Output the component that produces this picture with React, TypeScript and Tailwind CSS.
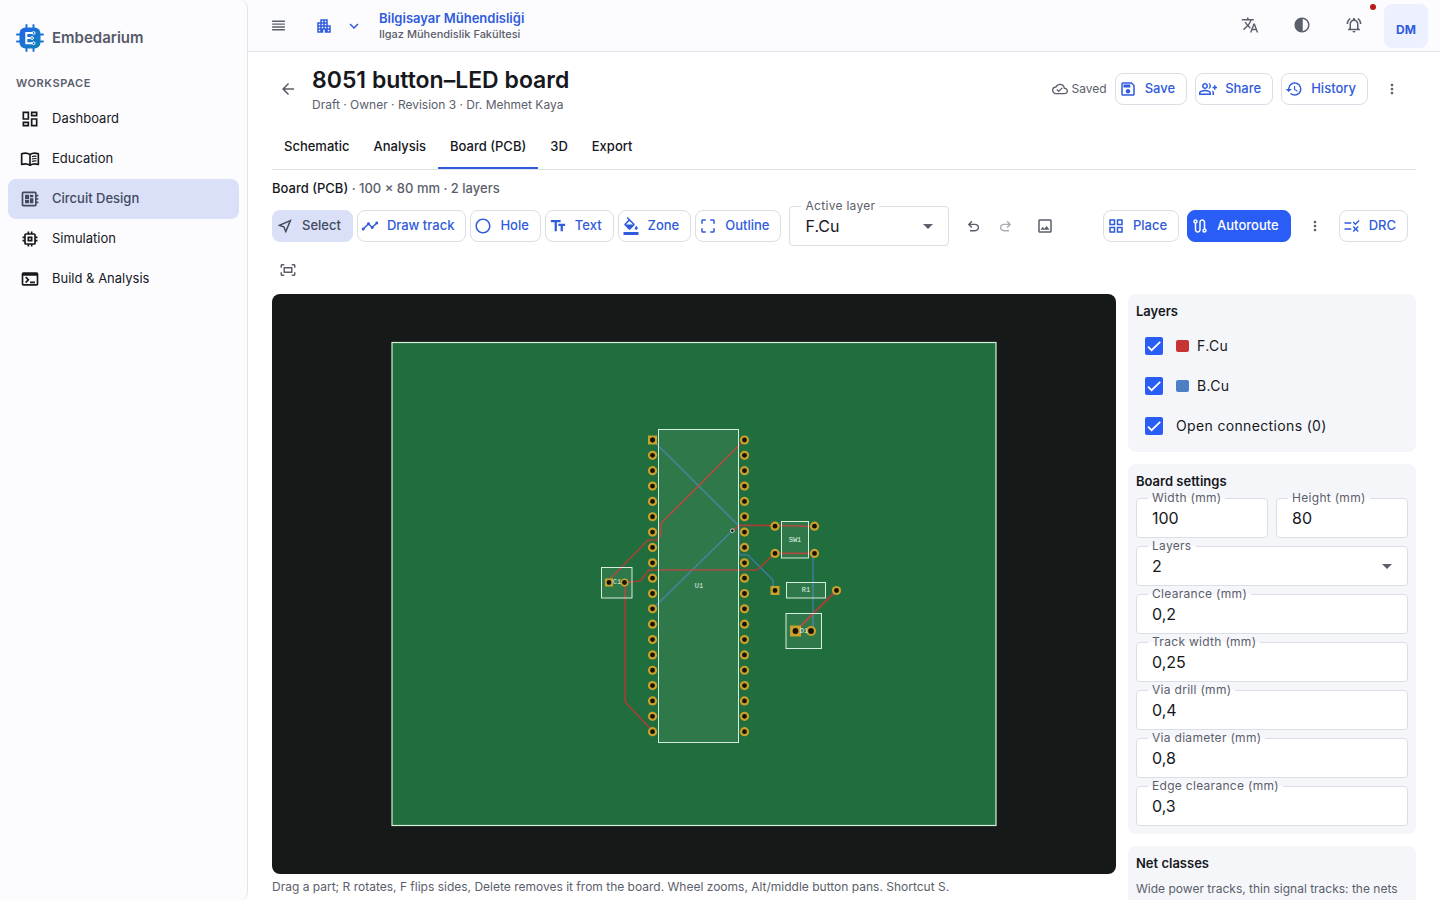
import React, { useState } from 'react';
import type { IconType } from 'react-icons';
import {
  MdApartment,
  MdArrowBack,
  MdArrowDropDown,
  MdContrast,
  MdCropFree,
  MdFormatColorFill,
  MdHistory,
  MdKeyboardArrowDown,
  MdMoreVert,
  MdOutlineCircle,
  MdOutlineCloudDone,
  MdOutlineDashboard,
  MdOutlineDeveloperBoard,
  MdOutlineFitScreen,
  MdOutlineGridView,
  MdOutlineGroupAdd,
  MdOutlineImage,
  MdOutlineMemory,
  MdOutlineNearMe,
  MdOutlineNotificationsActive,
  MdOutlineRoute,
  MdOutlineRule,
  MdOutlineSave,
  MdOutlineTerminal,
  MdReorder,
  MdTextFields,
  MdTimeline,
  MdTranslate,
} from 'react-icons/md';

type IconComponent = IconType | ((props: { className?: string }) => React.ReactNode);

function BookIcon({ className }: { className?: string }) {
  return (
    <svg
      viewBox="0 0 24 24"
      fill="none"
      stroke="currentColor"
      strokeWidth="2"
      strokeLinejoin="round"
      className={className}
      aria-hidden="true"
    >
      <path d="M12 6.6C9.4 4.9 5.2 4.6 2 5.8V18.6C5.2 17.6 9.4 17.8 12 19.5C14.6 17.8 18.8 17.6 22 18.6V5.8C18.8 4.6 14.6 4.9 12 6.6ZM12 6.6V19.5" />
      <path d="M14.3 9.3C16 8.6 18 8.5 19.8 8.8M14.3 12.1C16 11.4 18 11.3 19.8 11.6M14.3 14.9C16 14.2 18 14.1 19.8 14.4" strokeWidth="1.4" />
    </svg>
  );
}

const navItems: { label: string; icon: IconComponent }[] = [
  { label: 'Dashboard', icon: MdOutlineDashboard },
  { label: 'Education', icon: BookIcon },
  { label: 'Circuit Design', icon: MdOutlineDeveloperBoard },
  { label: 'Simulation', icon: MdOutlineMemory },
  { label: 'Build & Analysis', icon: MdOutlineTerminal },
];

const tabs = ['Schematic', 'Analysis', 'Board (PCB)', '3D', 'Export'];

const tools: { label: string; icon: IconType }[] = [
  { label: 'Select', icon: MdOutlineNearMe },
  { label: 'Draw track', icon: MdTimeline },
  { label: 'Hole', icon: MdOutlineCircle },
  { label: 'Text', icon: MdTextFields },
  { label: 'Zone', icon: MdFormatColorFill },
  { label: 'Outline', icon: MdCropFree },
];

function Logo() {
  return (
    <svg viewBox="0 0 28 28" className="size-7" aria-hidden="true">
      <defs>
        <linearGradient id="logo" x1="0" y1="0" x2="1" y2="1">
          <stop offset="0" stopColor="#2563eb" />
          <stop offset="1" stopColor="#0d84b8" />
        </linearGradient>
      </defs>
      <path
        d="M10.5 1v4M17.5 1v4M10.5 23v4M17.5 23v4M1 10.5h4M1 17.5h4M23 10.5h4M23 17.5h4"
        stroke="#1f74cf"
        strokeWidth="2"
        strokeLinecap="round"
      />
      <rect x="3.5" y="3.5" width="21" height="21" rx="6" fill="url(#logo)" />
      <path
        d="M16 9H10.3V19.3H16M10.3 14H14.5"
        fill="none"
        stroke="#fff"
        strokeWidth="2"
      />
      <g fill="#1873cc" stroke="#fff" strokeWidth="1">
        <circle cx="17.6" cy="9" r="1.4" />
        <circle cx="16" cy="14" r="1.4" />
        <circle cx="17.6" cy="19.2" r="1.4" />
      </g>
    </svg>
  );
}

function UndoIcon({ className }: { className?: string }) {
  return (
    <svg viewBox="0 -960 960 960" fill="currentColor" className={className} aria-hidden="true">
      <path d="M280-200v-80h284q63 0 109.5-40T720-420q0-60-46.5-100T564-560H312l104 104-56 56-200-200 200-200 56 56-104 104h252q97 0 166.5 63T800-420q0 94-69.5 157T564-200H280Z" />
    </svg>
  );
}

function IconButton({
  label,
  className = 'size-8',
  children,
}: {
  label: string;
  className?: string;
  children: React.ReactNode;
}) {
  return (
    <button
      type="button"
      aria-label={label}
      className={`flex shrink-0 items-center justify-center rounded-lg text-[#5b5e6b] ${className}`}
    >
      {children}
    </button>
  );
}

type Variant = 'outlined' | 'selected' | 'filled';

const variants: Record<Variant, string> = {
  outlined: 'border-[#dcdee6] bg-white text-[#2f5bdc]',
  selected: 'border-[#d9e0f7] bg-[#d9e0f7] text-[#434a60]',
  filled: 'border-[#2a5cf6] bg-[#2a5cf6] text-white',
};

function ToolButton({
  label,
  icon: Icon,
  variant = 'outlined',
  onClick,
}: {
  label: string;
  icon: IconType;
  variant?: Variant;
  onClick?: () => void;
}) {
  return (
    <button
      type="button"
      onClick={onClick}
      className={`flex h-8 shrink-0 items-center gap-2 rounded-lg border pr-[11px] pl-[3px] text-[13px] font-medium ${variants[variant]}`}
    >
      <Icon className="size-[18px]" />
      {label}
    </button>
  );
}

function Sidebar() {
  return (
    <aside className="flex w-[248px] shrink-0 flex-col rounded-r-lg border-r border-[#e3e4ea] bg-[#fcfcff] px-2">
      <div className="flex items-center gap-2 px-2 pt-6">
        <Logo />
        <span className="text-[15px] leading-7 font-semibold text-[#565a68]">Embedarium</span>
      </div>
      <h2 className="mt-[23px] px-2 text-[11px] leading-4 font-semibold tracking-wider text-[#5b5e6b]">
        WORKSPACE
      </h2>
      <nav className="mt-2 flex flex-col">
        {navItems.map(({ label, icon: Icon }) => (
          <a
            key={label}
            href="#"
            className={
              label === 'Circuit Design'
                ? 'flex h-10 items-center gap-3 rounded-lg bg-[#d9e0f7] px-3 text-[13px] font-medium text-[#434a60]'
                : 'flex h-10 items-center gap-3 rounded-lg px-3 text-[13px] text-[#16181d]'
            }
          >
            <Icon className="size-5" />
            {label}
          </a>
        ))}
      </nav>
    </aside>
  );
}

function TopBar() {
  return (
    <header className="flex h-[52px] shrink-0 items-center border-b border-[#e3e4ea] bg-[#fcfcff] pr-3 pl-[10px]">
      <IconButton label="Menu" className="size-10 pb-px">
        <MdReorder className="size-[17px]" />
      </IconButton>
      <button
        type="button"
        aria-label="Department"
        className="ml-3 flex h-10 items-center gap-3 px-[5px] text-[#2f5bdc]"
      >
        <MdApartment className="size-[18px]" />
        <MdKeyboardArrowDown className="size-[18px]" />
      </button>
      <div className="ml-[11px] flex flex-col pb-[2px]">
        <span className="text-[13px] leading-[18px] font-semibold text-[#2f5bdc]">
          Bilgisayar Mühendisliği
        </span>
        <span className="text-[11px] leading-[14px] font-medium text-[#5b5e6b]">
          Ilgaz Mühendislik Fakültesi
        </span>
      </div>
      <div className="ml-auto flex items-center gap-3">
        <IconButton label="Language" className="size-10 pb-px">
          <MdTranslate className="size-[18px]" />
        </IconButton>
        <IconButton label="Theme" className="size-10 pb-px">
          <MdContrast className="size-[18px]" />
        </IconButton>
        <div className="relative">
          <IconButton label="Notifications" className="size-10 pb-px">
            <MdOutlineNotificationsActive className="size-[18px]" />
          </IconButton>
          <span className="absolute -top-[2px] -right-[2px] size-[6px] rounded-full bg-[#ba1a1a]" />
        </div>
        <button
          type="button"
          className="-ml-[2px] flex size-11 items-center justify-center rounded-lg bg-[#edf1ff] pt-2 text-xs font-bold text-[#2f5bdc]"
        >
          DM
        </button>
      </div>
    </header>
  );
}

function Field({
  id,
  label,
  value,
  options,
}: {
  id: string;
  label: string;
  value: string;
  options?: string[];
}) {
  return (
    <fieldset className="min-w-0 flex-1 rounded border border-[#dcdee6] bg-white pr-1 pl-[11px]">
      <legend className="px-1 text-xs leading-4 tracking-wide text-[#5b5e6b]">
        <label htmlFor={id}>{label}</label>
      </legend>
      <div className="flex h-[31px] items-center px-1 pb-2">
        {options ? (
          <>
            <select
              id={id}
              defaultValue={value}
              className="w-full appearance-none bg-transparent text-base leading-6 text-[#16181d] outline-none"
            >
              {options.map((o) => (
                <option key={o}>{o}</option>
              ))}
            </select>
            <MdArrowDropDown className="pointer-events-none -ml-6 size-6 shrink-0 text-[#5b5e6b]" />
          </>
        ) : (
          <input
            id={id}
            type="text"
            defaultValue={value}
            className="w-full min-w-0 bg-transparent text-base leading-6 text-[#16181d] outline-none"
          />
        )}
      </div>
    </fieldset>
  );
}

function LayerCheck({ id, label, color }: { id: string; label: string; color?: string }) {
  return (
    <label htmlFor={id} className="flex h-10 items-center text-sm text-[#16181d]">
      <span className="grid size-9 shrink-0 place-items-center">
        <input
          id={id}
          type="checkbox"
          defaultChecked
          className="peer col-start-1 row-start-1 size-[18px] appearance-none rounded-xs border-2 border-[#5b5e6b] checked:border-[#2a5cf6] checked:bg-[#2a5cf6]"
        />
        <svg
          viewBox="0 0 18 18"
          className="pointer-events-none col-start-1 row-start-1 hidden size-[18px] peer-checked:block"
          aria-hidden="true"
        >
          <path d="M3 9.6l3.6 3.6L15.2 4.8" fill="none" stroke="#fff" strokeWidth="1.7" />
        </svg>
      </span>
      {color && <span className={`mr-2 ml-1 h-3 w-[13px] rounded-xs ${color}`} />}
      <span className={color ? 'tracking-wide' : 'ml-1 tracking-wide'}>{label}</span>
    </label>
  );
}

// footprint outlines: [name, x, y, width, height, label x, label y]
const parts: [string, number, number, number, number, number, number][] = [
  ['U1', 386.5, 135.5, 80, 313, 427, 294],
  ['C1', 329.5, 273.5, 30.5, 30.5, 345, 290],
  ['SW1', 509.5, 227.5, 27, 36.5, 523, 248],
  ['R1', 514.5, 288.5, 39, 15.5, 534, 298],
  ['D1', 514, 319.5, 35.5, 35, 532, 339],
];

const squarePads = [
  [380.5, 146, 4.5],
  [337, 288.5, 4],
  [503, 296.5, 4.5],
  [523.5, 337, 5.5],
];

const roundPads = [
  [352.5, 288.5, 4],
  [503, 232.2, 4.6],
  [542.5, 232.2, 4.6],
  [503, 259.4, 4.6],
  [542.5, 259.4, 4.6],
  [564.5, 296.5, 4.6],
  [539, 337, 5],
];

const pins = Array.from({ length: 20 }, (_, i) => 146 + i * 15.35);

function BoardCanvas() {
  return (
    <svg
      viewBox="0 0 844 580"
      role="img"
      aria-label="Board"
      className="block w-full rounded-lg bg-[#151918]"
    >
      <rect x="120" y="48.5" width="604" height="483" fill="#206e3d" stroke="#d5eedd" strokeWidth="1.2" />
      <g fill="none" stroke="#4d7fc4" strokeOpacity="0.65" strokeWidth="1.6">
        <path d="M380.5 146L467 232V259L469 261H476L501 286V296" />
        <path d="M460 237L380.5 315" />
        <path d="M541 259V337" />
      </g>
      <g fill="none" stroke="#c83434" strokeOpacity="0.8" strokeWidth="1.7">
        <path d="M472.5 146L388.5 230V242L385 246H376L337 286" />
        <path d="M460 237L468 231.3H503L542 232.5" />
        <path d="M542 259.4H503L485 276H377L368 287L352.5 288.5" />
        <path d="M353.3 288.5V408L380.5 437" />
        <path d="M564.5 296.5L523.5 337" strokeWidth="2" />
      </g>
      {parts.map(([name, x, y, w, h]) => (
        <rect
          key={name}
          x={x}
          y={y}
          width={w}
          height={h}
          fill="#fff"
          fillOpacity="0.07"
          stroke="#d5eedd"
          strokeWidth="1"
        />
      ))}
      <g fill="#c9a02c">
        {squarePads.map(([x, y, r]) => (
          <rect key={`${x}-${y}`} x={x - r} y={y - r} width={r * 2} height={r * 2} />
        ))}
        {roundPads.map(([x, y, r]) => (
          <circle key={`${x}-${y}`} cx={x} cy={y} r={r} />
        ))}
        {pins.slice(1).map((y) => (
          <circle key={y} cx="380.5" cy={y} r="4.6" />
        ))}
        {pins.map((y) => (
          <circle key={y} cx="472.5" cy={y} r="4.6" />
        ))}
      </g>
      <g fill="#161208">
        {[...squarePads, ...roundPads].map(([x, y, r]) => (
          <circle key={`${x}-${y}`} cx={x} cy={y} r={r > 4.8 ? 2.9 : 2.4} />
        ))}
        {pins.map((y) => (
          <circle key={y} cx="380.5" cy={y} r="2.4" />
        ))}
        {pins.map((y) => (
          <circle key={y} cx="472.5" cy={y} r="2.4" />
        ))}
      </g>
      <circle cx="460.3" cy="236.7" r="1.9" fill="#1a2b1f" stroke="#c9d3cc" strokeWidth="1" />
      <g fill="#e0f2e5" fontSize="7" textAnchor="middle" className="font-['Liberation_Mono',monospace]">
        {parts.map(([name, , , , , x, y]) => (
          <text key={name} x={x} y={y}>
            {name}
          </text>
        ))}
      </g>
    </svg>
  );
}

function SidePanel() {
  return (
    <div className="flex w-72 shrink-0 flex-col gap-3">
      <section className="rounded-lg bg-[#f5f6fa] px-2 pt-2 pb-[6px]">
        <h2 className="text-[13px] leading-[18px] font-semibold text-[#16181d]">Layers</h2>
        <div className="mt-[6px] flex flex-col">
          <LayerCheck id="layer-f" label="F.Cu" color="bg-[#c83434]" />
          <LayerCheck id="layer-b" label="B.Cu" color="bg-[#4d7fc4]" />
          <LayerCheck id="layer-open" label="Open connections (0)" />
        </div>
      </section>

      <section className="rounded-lg bg-[#f5f6fa] p-2">
        <h2 className="text-[13px] leading-[18px] font-semibold text-[#16181d]">Board settings</h2>
        <div className="flex flex-col">
          <div className="flex gap-2">
            <Field id="board-width" label="Width (mm)" value="100" />
            <Field id="board-height" label="Height (mm)" value="80" />
          </div>
          <Field id="board-layers" label="Layers" value="2" options={['1', '2', '4']} />
          <Field id="clearance" label="Clearance (mm)" value="0,2" />
          <Field id="track-width" label="Track width (mm)" value="0,25" />
          <Field id="via-drill" label="Via drill (mm)" value="0,4" />
          <Field id="via-diameter" label="Via diameter (mm)" value="0,8" />
          <Field id="edge-clearance" label="Edge clearance (mm)" value="0,3" />
        </div>
      </section>

      <section className="rounded-lg bg-[#f5f6fa] p-2">
        <h2 className="text-[13px] leading-[18px] font-semibold text-[#16181d]">Net classes</h2>
        <p className="mt-2 text-xs leading-[18px] text-[#5b5e6b]">
          Wide power tracks, thin signal tracks: the nets
        </p>
      </section>
    </div>
  );
}

export default function App() {
  const [tab, setTab] = useState('Board (PCB)');
  const [tool, setTool] = useState('Select');

  return (
    <div className="flex h-screen overflow-hidden bg-[#fcfcff] font-[Inter,sans-serif]">
      <Sidebar />
      <div className="flex min-w-0 flex-1 flex-col">
        <TopBar />
        <main className="flex-1 overflow-hidden bg-white px-6">
          <div className="flex items-center pt-3">
            <IconButton label="Back">
              <MdArrowBack className="size-[18px]" />
            </IconButton>
            <div className="ml-2">
              <h1 className="text-[23px] leading-8 font-semibold text-[#16181d]">
                8051 button–LED board
              </h1>
              <p className="text-xs leading-[18px] text-[#5b5e6b]">
                Draft · Owner · Revision 3 · Dr. Mehmet Kaya
              </p>
            </div>
            <div className="mr-2 ml-auto flex items-center gap-2">
              <span className="flex items-center gap-1 text-xs text-[#5b5e6b]">
                <MdOutlineCloudDone className="size-4" />
                Saved
              </span>
              <ToolButton label="Save" icon={MdOutlineSave} />
              <ToolButton label="Share" icon={MdOutlineGroupAdd} />
              <ToolButton label="History" icon={MdHistory} />
              <IconButton label="More actions">
                <MdMoreVert className="size-4" />
              </IconButton>
            </div>
          </div>

          <div role="tablist" className="mt-3 flex border-b border-[#dfe2e8]">
            {tabs.map((t) => (
              <button
                key={t}
                type="button"
                role="tab"
                aria-selected={t === tab}
                onClick={() => setTab(t)}
                className={
                  t === tab
                    ? 'h-[43px] border-b-2 border-[#2f5bdc] px-3 text-[13px] font-medium text-[#16181d]'
                    : 'h-[43px] border-b-2 border-transparent px-3 text-[13px] font-medium text-[#16181d]'
                }
              >
                {t}
              </button>
            ))}
          </div>

          <p className="mt-2 text-[13px] leading-5 font-medium text-[#5b5e6b]">
            <span className="text-[#16181d]">Board (PCB)</span> · 100 × 80 mm · 2 layers
          </p>

          <div className="flex flex-wrap items-center gap-2">
            <div className="flex gap-1 pt-2">
              {tools.map(({ label, icon }) => (
                <ToolButton
                  key={label}
                  label={label}
                  icon={icon}
                  variant={label === tool ? 'selected' : 'outlined'}
                  onClick={() => setTool(label)}
                />
              ))}
            </div>
            <div className="flex w-40">
              <Field id="active-layer" label="Active layer" value="F.Cu" options={['F.Cu', 'B.Cu']} />
            </div>
            <div className="flex pt-2">
              <IconButton label="Undo">
                <UndoIcon className="size-[17px]" />
              </IconButton>
              <IconButton label="Redo">
                <UndoIcon className="size-[17px] -scale-x-100 opacity-50" />
              </IconButton>
            </div>
            <div className="pt-2">
              <IconButton label="Background image">
                <MdOutlineImage className="size-[18px]" />
              </IconButton>
            </div>
            <div className="mr-2 ml-auto flex gap-2 pt-2">
              <ToolButton label="Place" icon={MdOutlineGridView} />
              <ToolButton label="Autoroute" icon={MdOutlineRoute} variant="filled" />
              <IconButton label="Autoroute options">
                <MdMoreVert className="size-4" />
              </IconButton>
              <ToolButton label="DRC" icon={MdOutlineRule} />
            </div>
            <IconButton label="Fit to screen">
              <MdOutlineFitScreen className="size-[18px]" />
            </IconButton>
          </div>

          <div className="mt-2 flex items-start gap-3">
            <div className="min-w-0 flex-1">
              <BoardCanvas />
              <p className="mt-1 text-xs leading-[18px] text-[#5b5e6b]">
                Drag a part; R rotates, F flips sides, Delete removes it from the board. Wheel
                zooms, Alt/middle button pans. Shortcut S.
              </p>
            </div>
            <SidePanel />
          </div>
        </main>
      </div>
    </div>
  );
}
